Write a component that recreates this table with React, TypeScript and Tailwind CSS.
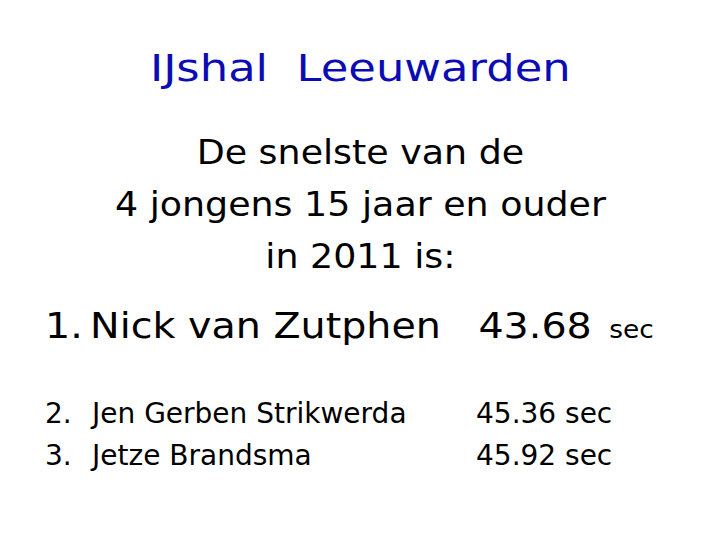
export default function App() {
  return (
    <div className="w-[720px] h-[540px] overflow-hidden bg-white text-black flex flex-col font-['DejaVu_Sans',Verdana,sans-serif]">
      {/* Title */}
      <h1 className="mt-[49px] self-center w-fit text-center text-[38px] leading-none text-[#0c0cb4] whitespace-pre scale-x-[1.18]">
        IJshal  Leeuwarden
      </h1>

      {/* Intro */}
      <div className="mt-[39px] self-center w-fit text-center text-[34px] leading-[52px] scale-x-[1.07]">
        <p>De snelste van de</p>
        <p>4 jongens 15 jaar en ouder</p>
        <p>in 2011 is:</p>
      </div>

      {/* Winner */}
      <div className="mt-[26px] ml-[45px] self-start w-fit flex items-baseline origin-left scale-x-[1.1] leading-none">
        <span className="w-[41px] text-[36px]">1.</span>
        <span className="w-[353px] text-[36px]">Nick van Zutphen</span>
        <span className="text-[36px]">43.68</span>
        <span className="ml-[16px] text-[24px]">sec</span>
      </div>

      {/* Runners-up */}
      <div className="mt-[49px] ml-[45px] flex flex-col text-[28px] leading-[42px]">
        <div className="flex">
          <span className="w-[47px]">2.</span>
          <span className="w-[384px]">Jen Gerben Strikwerda</span>
          <span>45.36 sec</span>
        </div>
        <div className="flex">
          <span className="w-[47px]">3.</span>
          <span className="w-[384px]">Jetze Brandsma</span>
          <span>45.92 sec</span>
        </div>
      </div>
    </div>
  );
}
